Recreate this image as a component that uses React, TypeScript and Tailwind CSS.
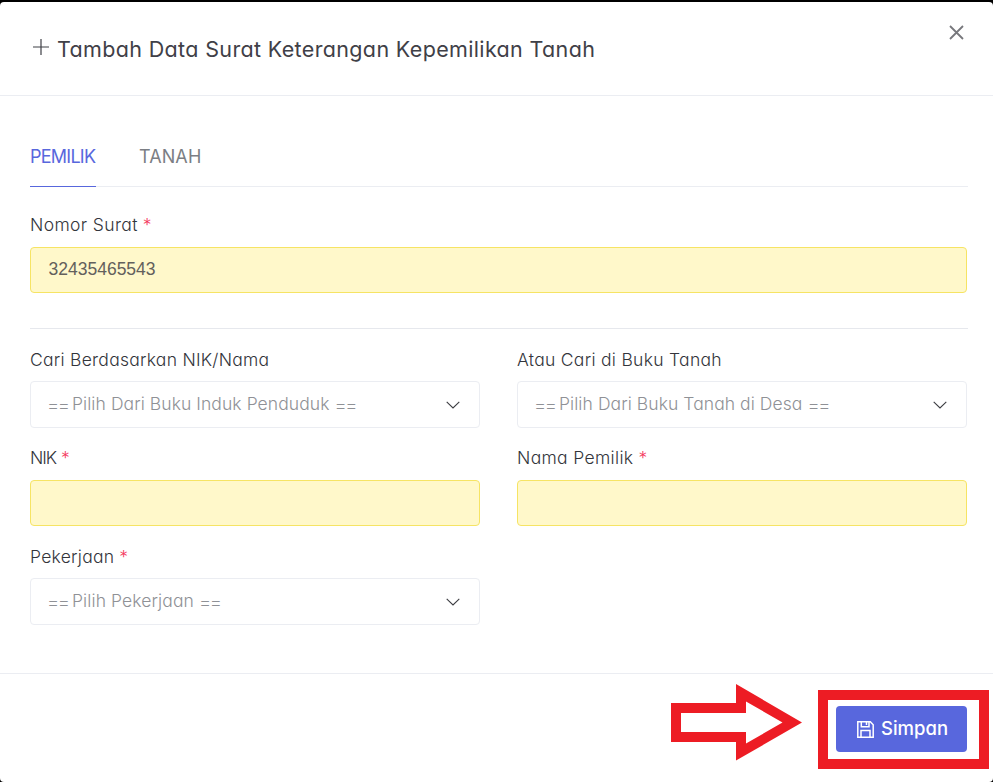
import type { ReactNode } from "react";

function Field({ label, required, spacing, gap, children }: {
  label: string;
  required?: boolean;
  spacing: string;
  gap: string;
  children: ReactNode;
}) {
  return (
    <div className={"flex flex-col " + gap}>
      <label className="flex h-6 items-center text-[17.5px] leading-6 font-light text-[#33353b]">
        <span className={"whitespace-nowrap " + spacing}>{label}</span>
        {required && <span className="ml-[5px] font-light text-[#f4365c]">*</span>}
      </label>
      {children}
    </div>
  );
}

function Equals() {
  return <span className="w-[21px] text-[20.5px] leading-5 font-extralight tracking-[-2.4px]">==</span>;
}

function Select({ text, spacing }: { text: string; spacing: string }) {
  return (
    <div className="flex h-[47px] items-center justify-between rounded border border-[#ebedf2] pr-[19px] pl-[15.5px] text-[17.5px] font-light text-[#8f9196]">
      <div className="flex items-center gap-[4.5px] whitespace-nowrap">
        <Equals />
        <span className={spacing}>{text}</span>
        <Equals />
      </div>
      <svg width="14" height="8" viewBox="0 0 14 8" className="mt-px" fill="none" stroke="#3c3d42" strokeWidth="1.1">
        <path d="M.7.8 7 7 13.3.8" />
      </svg>
    </div>
  );
}

function YellowInput({ value }: { value?: string }) {
  return (
    <div className="flex h-[46px] items-center rounded border border-[#f6e464] bg-[#fff8ca] pb-0.5 pl-[17.5px] text-[17.5px] text-[#63605c] [font-family:'Liberation_Sans',Arial,sans-serif]">
      {value}
    </div>
  );
}

export default function App() {
  return (
    <div className="h-[782px] w-[993px] overflow-hidden bg-black pt-0.5 [font-family:Inter,'Open_Sans',sans-serif] [font-feature-settings:'cv11']">
      <div className="flex h-[780px] flex-col rounded bg-white">
        <header className="flex h-[94px] items-start justify-between border-b border-[#ebedf2] pr-[29px] pl-[33px]">
          <h1 className="mt-8 flex h-[30px] items-center text-[21.5px] leading-[30px] tracking-[0.35px] text-[#3f4047]">
            <svg width="16" height="16" viewBox="0 0 16 16" className="mr-2 mb-1" fill="none" stroke="currentColor" strokeWidth="1.2">
              <path d="M8 0V16M0 8H16" />
            </svg>
            Tambah Data Surat Keterangan Kepemilikan Tanah
          </h1>
          <svg width="15" height="15" viewBox="0 0 15 15" className="mt-[23px]" fill="none" stroke="#77787c" strokeWidth="1.8">
            <path d="M1 1 14 14M14 1 1 14" />
          </svg>
        </header>

        <main className="h-[577px] pt-[42px] pr-[26px] pl-[30px]">
          <nav className="-mr-px flex h-[49px] gap-[43px] border-b border-[#ebedf2] text-[18px] leading-[38px]">
            <a className="h-[49px] w-[66px] border-b border-[#5867dd] tracking-[-0.75px] text-[#5867dd]">PEMILIK</a>
            <a className="tracking-[0.1px] text-[#7b7e84]">TANAH</a>
          </nav>
          <form className="mt-[26px]">
            <Field label="Nomor Surat" required spacing="tracking-[0.38px]" gap="gap-[10px]">
              <YellowInput value="32435465543" />
            </Field>
            <div className="mt-[35px] -mr-px h-px bg-[#e6e8ed]" />
            <div className="mt-[19px] grid grid-cols-2 gap-x-[37px]">
              <Field label="Cari Berdasarkan NIK/Nama" spacing="tracking-[0.26px]" gap="gap-[9px]">
                <Select text="Pilih Dari Buku Induk Penduduk" spacing="tracking-[0.07px]" />
              </Field>
              <Field label="Atau Cari di Buku Tanah" spacing="tracking-[0.29px]" gap="gap-[9px]">
                <Select text="Pilih Dari Buku Tanah di Desa" spacing="tracking-[0.07px]" />
              </Field>
            </div>
            <div className="mt-[18px] grid grid-cols-2 gap-x-[37px]">
              <Field label="NIK" required spacing="tracking-[-1.1px]" gap="gap-[10px]">
                <YellowInput />
              </Field>
              <Field label="Nama Pemilik" required spacing="tracking-[0.34px]" gap="gap-[10px]">
                <YellowInput />
              </Field>
            </div>
            <div className="mt-[19px] grid grid-cols-2 gap-x-[37px]">
              <Field label="Pekerjaan" required spacing="tracking-[0.26px]" gap="gap-[9px]">
                <Select text="Pilih Pekerjaan" spacing="tracking-[0.1px]" />
              </Field>
            </div>
          </form>
        </main>

        <footer className="flex flex-1 items-start justify-end gap-4 border-t border-[#ebedf2] pr-1">
          <svg width="131" height="77" viewBox="0 0 131 77" className="mt-[10px]" fill="#ed1c24" fillRule="evenodd">
            <path d="M0 19H65V0L131 38.5 65 76.5V58H0ZM10 29V48H75V59.5L111.500 38.500 75 17.500V29Z" />
          </svg>
          <div className="mt-4 h-[79px] w-[171px] border-10 border-[#ed1c24] py-1.5 pr-3 pl-2">
            <button className="flex h-[46px] w-[131px] items-center rounded bg-[#5867dd] pl-[21px] text-[18.5px] font-medium text-white">
              <svg width="17" height="17" viewBox="0 0 17 17" className="mr-[7px]" fill="none" stroke="currentColor" strokeWidth="1.5">
                <path d="M.8.8H13.300L16.200 3.700V16.200H.8ZM4.300.8V5.700H12V.8M9.500 1V4M4 16V9.500H13V16" />
              </svg>
              <span className="pb-px">Simpan</span>
            </button>
          </div>
        </footer>
      </div>
    </div>
  );
}
